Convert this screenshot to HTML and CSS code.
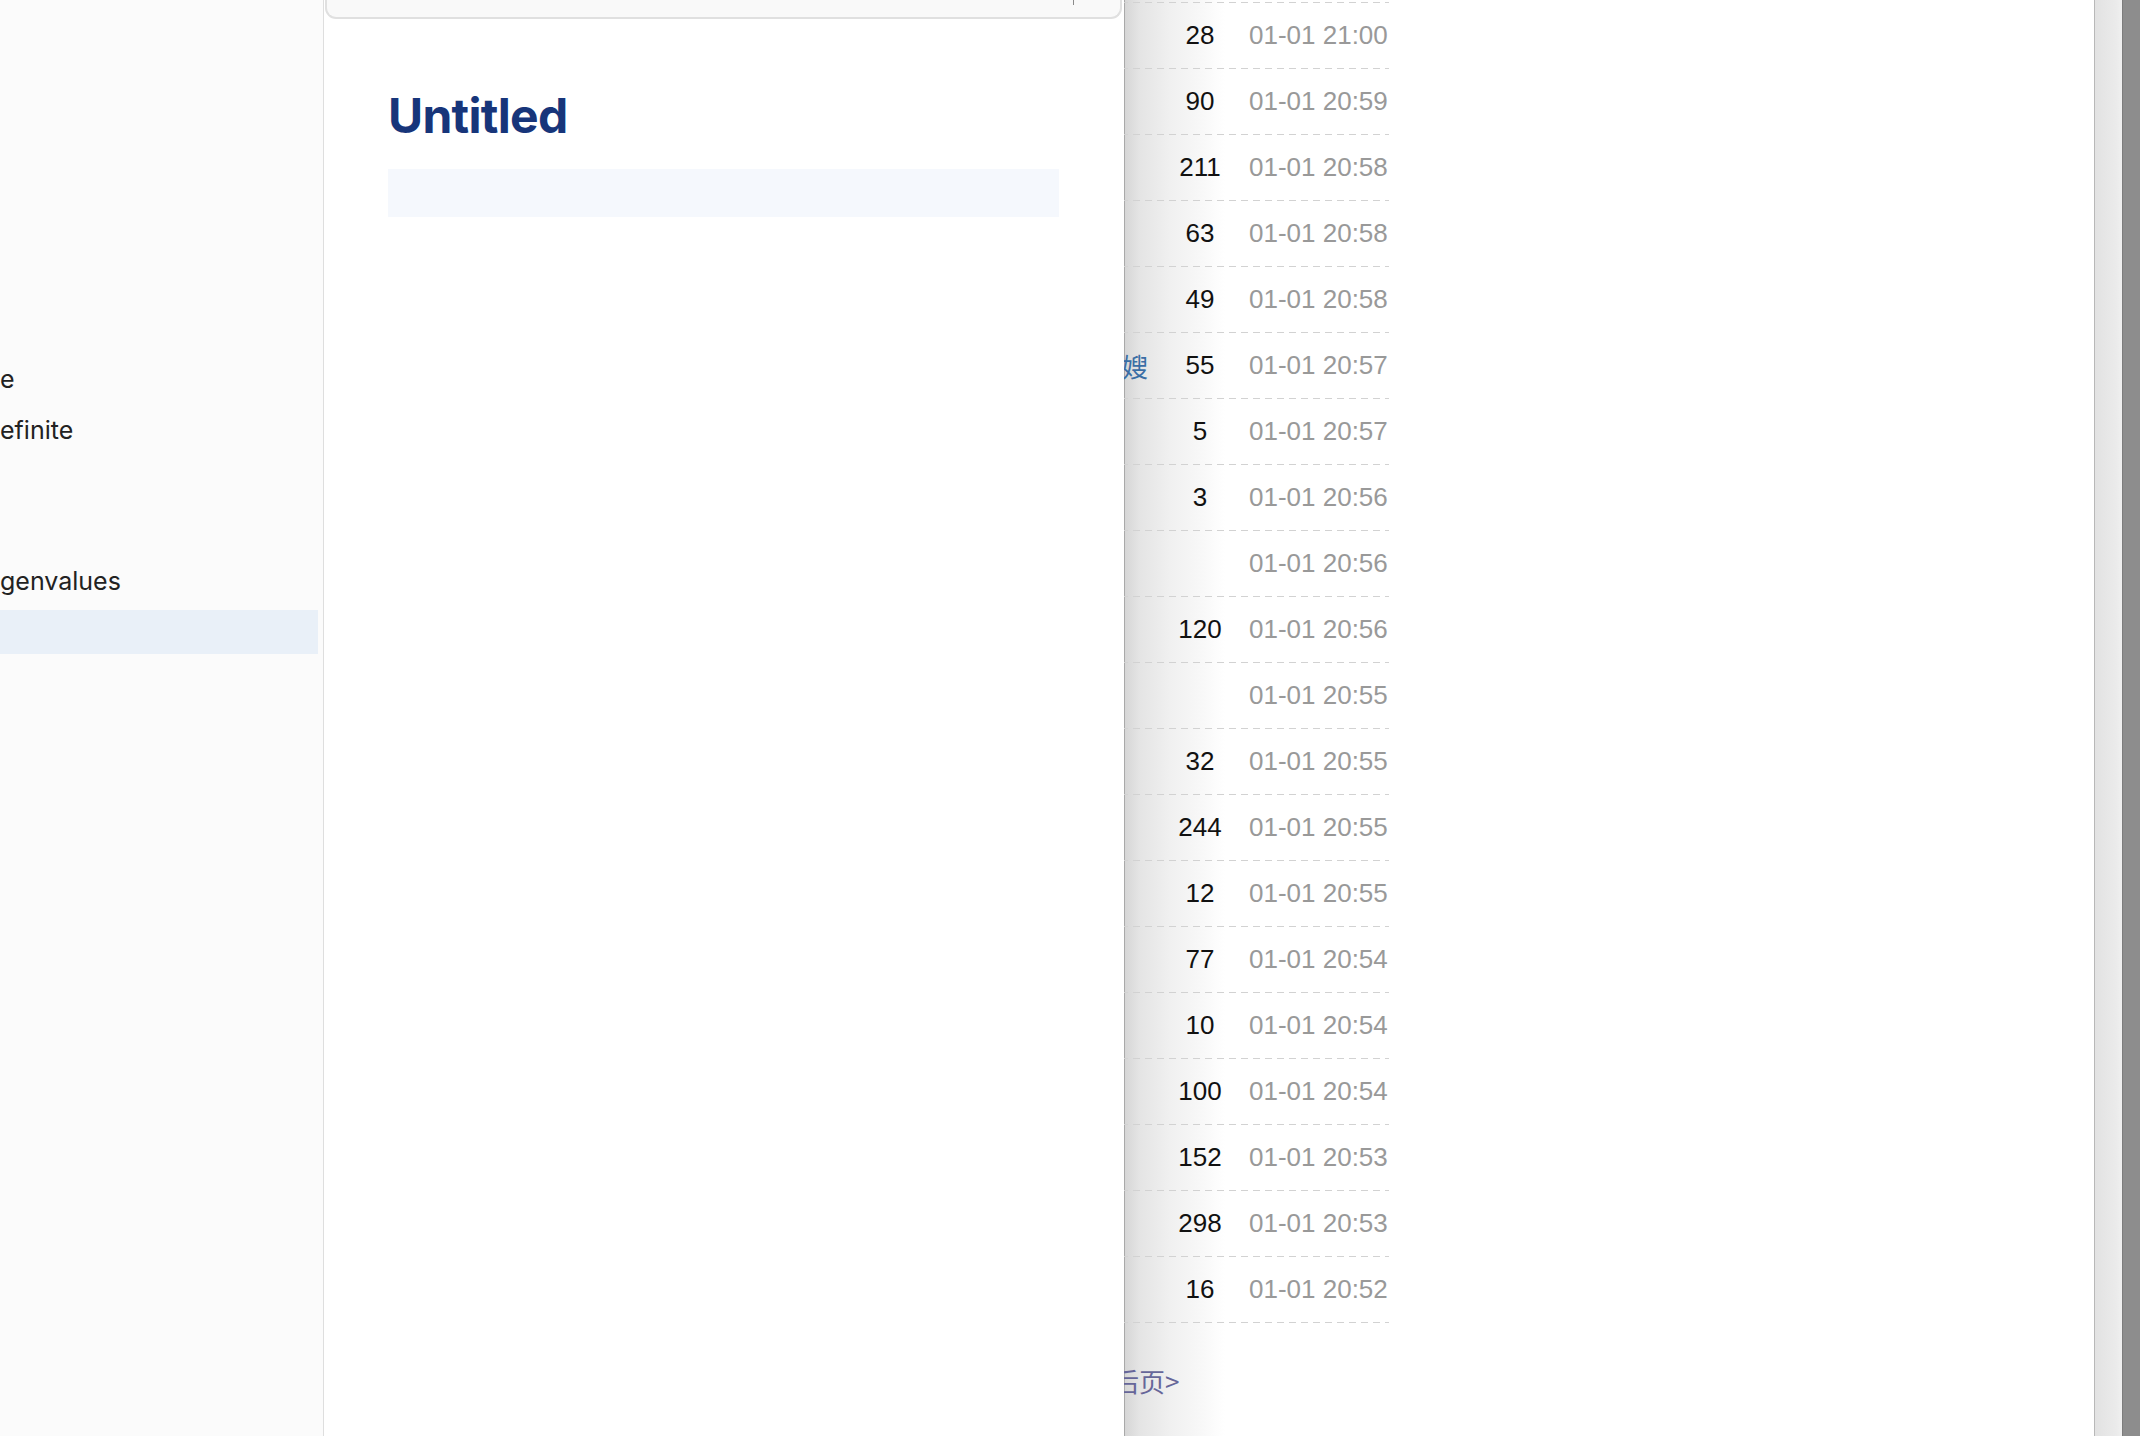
FILE: index.html
```html
<!DOCTYPE html>
<html lang="zh-CN">
<head>
<meta charset="utf-8">
<title>Untitled</title>
<link rel="stylesheet" href="styles.css">
</head>
<body>
<div class="app">
  <aside class="sidebar">
    <ul class="tree">
      <li class="tree-item">e</li>
      <li class="tree-item">efinite</li>
      <li class="tree-item"></li>
      <li class="tree-item"></li>
      <li class="tree-item">genvalues</li>
      <li class="tree-item is-active"></li>
    </ul>
  </aside>

  <main class="editor">
    <div class="toolbar"><span class="toolbar-tick"></span></div>
    <h1 class="doc-title">Untitled</h1>
    <div class="doc-block"></div>
  </main>

  <section class="page">
    <div class="topic-list">
      <div class="list-top"></div>
      <div class="row"><span class="c-name"></span><span class="c-count">28</span><span class="c-time">01-01 21:00</span></div>
      <div class="row"><span class="c-name"></span><span class="c-count">90</span><span class="c-time">01-01 20:59</span></div>
      <div class="row"><span class="c-name"></span><span class="c-count">211</span><span class="c-time">01-01 20:58</span></div>
      <div class="row"><span class="c-name"></span><span class="c-count">63</span><span class="c-time">01-01 20:58</span></div>
      <div class="row"><span class="c-name"></span><span class="c-count">49</span><span class="c-time">01-01 20:58</span></div>
      <div class="row"><span class="c-name"><a class="link">嫂</a></span><span class="c-count">55</span><span class="c-time">01-01 20:57</span></div>
      <div class="row"><span class="c-name"></span><span class="c-count">5</span><span class="c-time">01-01 20:57</span></div>
      <div class="row"><span class="c-name"></span><span class="c-count">3</span><span class="c-time">01-01 20:56</span></div>
      <div class="row"><span class="c-name"></span><span class="c-count"></span><span class="c-time">01-01 20:56</span></div>
      <div class="row"><span class="c-name"></span><span class="c-count">120</span><span class="c-time">01-01 20:56</span></div>
      <div class="row"><span class="c-name"></span><span class="c-count"></span><span class="c-time">01-01 20:55</span></div>
      <div class="row"><span class="c-name"></span><span class="c-count">32</span><span class="c-time">01-01 20:55</span></div>
      <div class="row"><span class="c-name"></span><span class="c-count">244</span><span class="c-time">01-01 20:55</span></div>
      <div class="row"><span class="c-name"></span><span class="c-count">12</span><span class="c-time">01-01 20:55</span></div>
      <div class="row"><span class="c-name"></span><span class="c-count">77</span><span class="c-time">01-01 20:54</span></div>
      <div class="row"><span class="c-name"></span><span class="c-count">10</span><span class="c-time">01-01 20:54</span></div>
      <div class="row"><span class="c-name"></span><span class="c-count">100</span><span class="c-time">01-01 20:54</span></div>
      <div class="row"><span class="c-name"></span><span class="c-count">152</span><span class="c-time">01-01 20:53</span></div>
      <div class="row"><span class="c-name"></span><span class="c-count">298</span><span class="c-time">01-01 20:53</span></div>
      <div class="row"><span class="c-name"></span><span class="c-count">16</span><span class="c-time">01-01 20:52</span></div>
    </div>
    <div class="paginator"><a class="next">后页&gt;</a></div>
  </section>

  <div class="gutter"></div>
  <div class="gutter-dark"></div>
</div>
</body>
</html>
```

FILE: styles.css
```css
* { box-sizing: border-box; }

html, body {
  margin: 0;
  padding: 0;
  height: 100%;
  overflow: hidden;
  background: #fff;
}

.app {
  display: flex;
  width: 2140px;
  height: 1436px;
  overflow: hidden;
}

/* ---------- sidebar ---------- */
.sidebar {
  flex: 0 0 324px;
  background: #fbfbfb;
  border-right: 1px solid #dedede;
  padding: 357px 5px 0 0;
  font-family: Inter, "Noto Sans", sans-serif;
  font-size: 25px;
  color: #222;
}

.tree {
  list-style: none;
  margin: 0;
  padding: 0;
  display: flex;
  flex-direction: column;
  gap: 6.5px;
}

.tree-item {
  height: 44px;
  line-height: 44px;
  white-space: nowrap;
  overflow: hidden;
}

.tree-item.is-active {
  background: #e9f0f8;
}

/* ---------- editor ---------- */
.editor {
  flex: 0 0 800px;
  position: relative;
  z-index: 2;
  background: #fff;
  padding: 0 65px 0 64px;
  display: flex;
  flex-direction: column;
}

.toolbar {
  margin: -2px -63px 0 -63px;
  height: 21px;
  background: #f9f9f9;
  border: 2px solid #e0e0e0;
  border-top: none;
  border-radius: 0 0 11px 11px;
  display: flex;
  justify-content: flex-end;
  align-items: flex-start;
  padding-right: 46px;
}

.toolbar-tick {
  width: 1px;
  height: 7px;
  background: #8a8a8a;
}

.doc-title {
  margin: 68px 0 0 0;
  font-family: Inter, "Noto Sans", sans-serif;
  font-weight: 700;
  font-size: 48px;
  line-height: 58px;
  letter-spacing: -0.7px;
  color: #17357a;
}

.doc-block {
  margin-top: 24px;
  height: 48px;
  background: #f5f8fd;
}

/* ---------- background page ---------- */
.page {
  flex: 0 0 970px;
  border-left: 1px solid #a9a9a9;
  background: linear-gradient(to right, #d6d6d6 0px, #e4e4e4 14px, #f0f0f0 45px, #f9f9f9 80px, #fefefe 96px, #fff 100px);
  font-family: "Liberation Sans", Arial, "Noto Sans CJK SC", sans-serif;
  font-size: 26px;
}

.topic-list {
  margin-left: -40px;
  width: 304px;
}

.list-top {
  height: 3px;
  background: repeating-linear-gradient(to right, #d2d2d2 0 7px, transparent 7px 12px) bottom / 100% 1px no-repeat;
}

.row {
  display: flex;
  align-items: center;
  height: 66px;
  padding-bottom: 1px;
  background: repeating-linear-gradient(to right, #d2d2d2 0 7px, transparent 7px 12px) bottom / 100% 1px no-repeat;
  white-space: nowrap;
}

.c-name {
  flex: 0 0 66px;
  text-align: right;
  padding-right: 3px;
  overflow: hidden;
}

.link {
  color: #3a6ea5;
  font-family: "Noto Sans CJK SC", sans-serif;
}

.c-count {
  flex: 0 0 98px;
  text-align: center;
  color: #111;
}

.c-time {
  flex: 0 0 140px;
  color: #999;
}

.paginator {
  margin: 43px 0 0 -12px;
  line-height: 30px;
}

.next {
  color: #669;
  font-family: "Noto Sans CJK SC", sans-serif;
}

/* ---------- window edge ---------- */
.gutter {
  flex: 0 0 28px;
  border-left: 1px solid #b8b8b8;
  background: linear-gradient(to right, #e2e2e2, #ebebeb 80%, #f0f0f0);
}

.gutter-dark {
  flex: 0 0 18px;
  border-left: 1px solid #7c7c7c;
  background: #8d8d8d;
}
```
